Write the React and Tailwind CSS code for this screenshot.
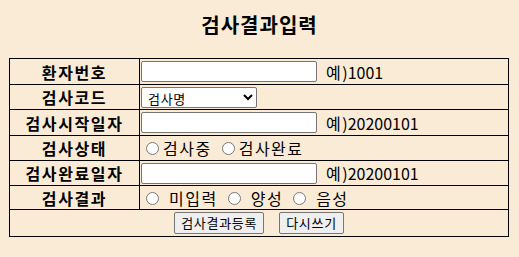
import { useState } from 'react';

const font = { fontFamily: '"Noto Sans CJK KR", "Noto Sans", sans-serif' };

function Row({ label, h, children, last }) {
  return (
    <div className={`flex ${last ? '' : 'border-b border-black'} ${h}`}>
      <div className="w-[130px] shrink-0 flex items-center justify-center border-r border-black text-[16px] font-bold tracking-[1.6px] text-black">
        {label}
      </div>
      <div className="flex-1 flex items-center pl-px text-[16px] text-black">{children}</div>
    </div>
  );
}

function TextBox() {
  return (
    <input
      type="text"
      className="w-[176px] h-[21px] bg-white border border-[#767676] rounded-[2px] px-[2px] text-[13px] outline-none"
    />
  );
}

function Hint({ value }) {
  return (
    <span className="ml-[9px]">
      <span className="tracking-[1.5px]">예</span>){value}
    </span>
  );
}

function Radio({ name, label, spaced }) {
  return (
    <label className="flex items-center">
      <input type="radio" name={name} className="w-[13px] h-[13px] ml-[5px] mr-[4px] mt-[1px] accent-[#767676]" />
      <span className={`tracking-[1.5px] ${spaced ? 'ml-[6px]' : ''}`}>{label}</span>
    </label>
  );
}

export default function App() {
  const [code, setCode] = useState('');

  return (
    <div className="min-h-[257px] w-full bg-[#faebd7]" style={font}>
      <div className="pt-[12px] pb-[20px] text-center text-[20px] leading-[26px] font-bold tracking-[1px] text-black">검사결과입력</div>

      <div className="ml-[9px] w-[500px] border border-black">
        <Row label="환자번호" h="h-[26px]">
          <TextBox />
          <Hint value="1001" />
        </Row>
        <Row label="검사코드" h="h-[25px]">
          <select
            value={code}
            onChange={(e) => setCode(e.target.value)}
            className="w-[116px] h-[21px] bg-white border border-[#767676] rounded-[2px] pl-[2px] text-[13px] tracking-[0.7px] text-black"
          >
            <option value="">검사명</option>
            <option value="A">결핵</option>
            <option value="B">장티푸스</option>
          </select>
        </Row>
        <Row label="검사시작일자" h="h-[26px]">
          <TextBox />
          <Hint value="20200101" />
        </Row>
        <Row label="검사상태" h="h-[25px]">
          <Radio name="status" label="검사중" />
          <span className="w-[5px]" />
          <Radio name="status" label="검사완료" />
        </Row>
        <Row label="검사완료일자" h="h-[25px]">
          <TextBox />
          <Hint value="20200101" />
        </Row>
        <Row label="검사결과" h="h-[24px]">
          <Radio name="result" label="미입력" spaced />
          <span className="w-[5px]" />
          <Radio name="result" label="양성" spaced />
          <span className="w-[5px]" />
          <Radio name="result" label="음성" spaced />
        </Row>
        <div className="h-[26px] flex items-center justify-center gap-[15px] pb-[1px]">
          <button className="h-[22px] px-[6px] bg-[#efefef] border border-[#767676] rounded-[2px] text-[13px] tracking-[0.7px] text-black">
            검사결과등록
          </button>
          <button className="h-[22px] px-[6px] bg-[#efefef] border border-[#767676] rounded-[2px] text-[13px] tracking-[0.7px] text-black">
            다시쓰기
          </button>
        </div>
      </div>
    </div>
  );
}
